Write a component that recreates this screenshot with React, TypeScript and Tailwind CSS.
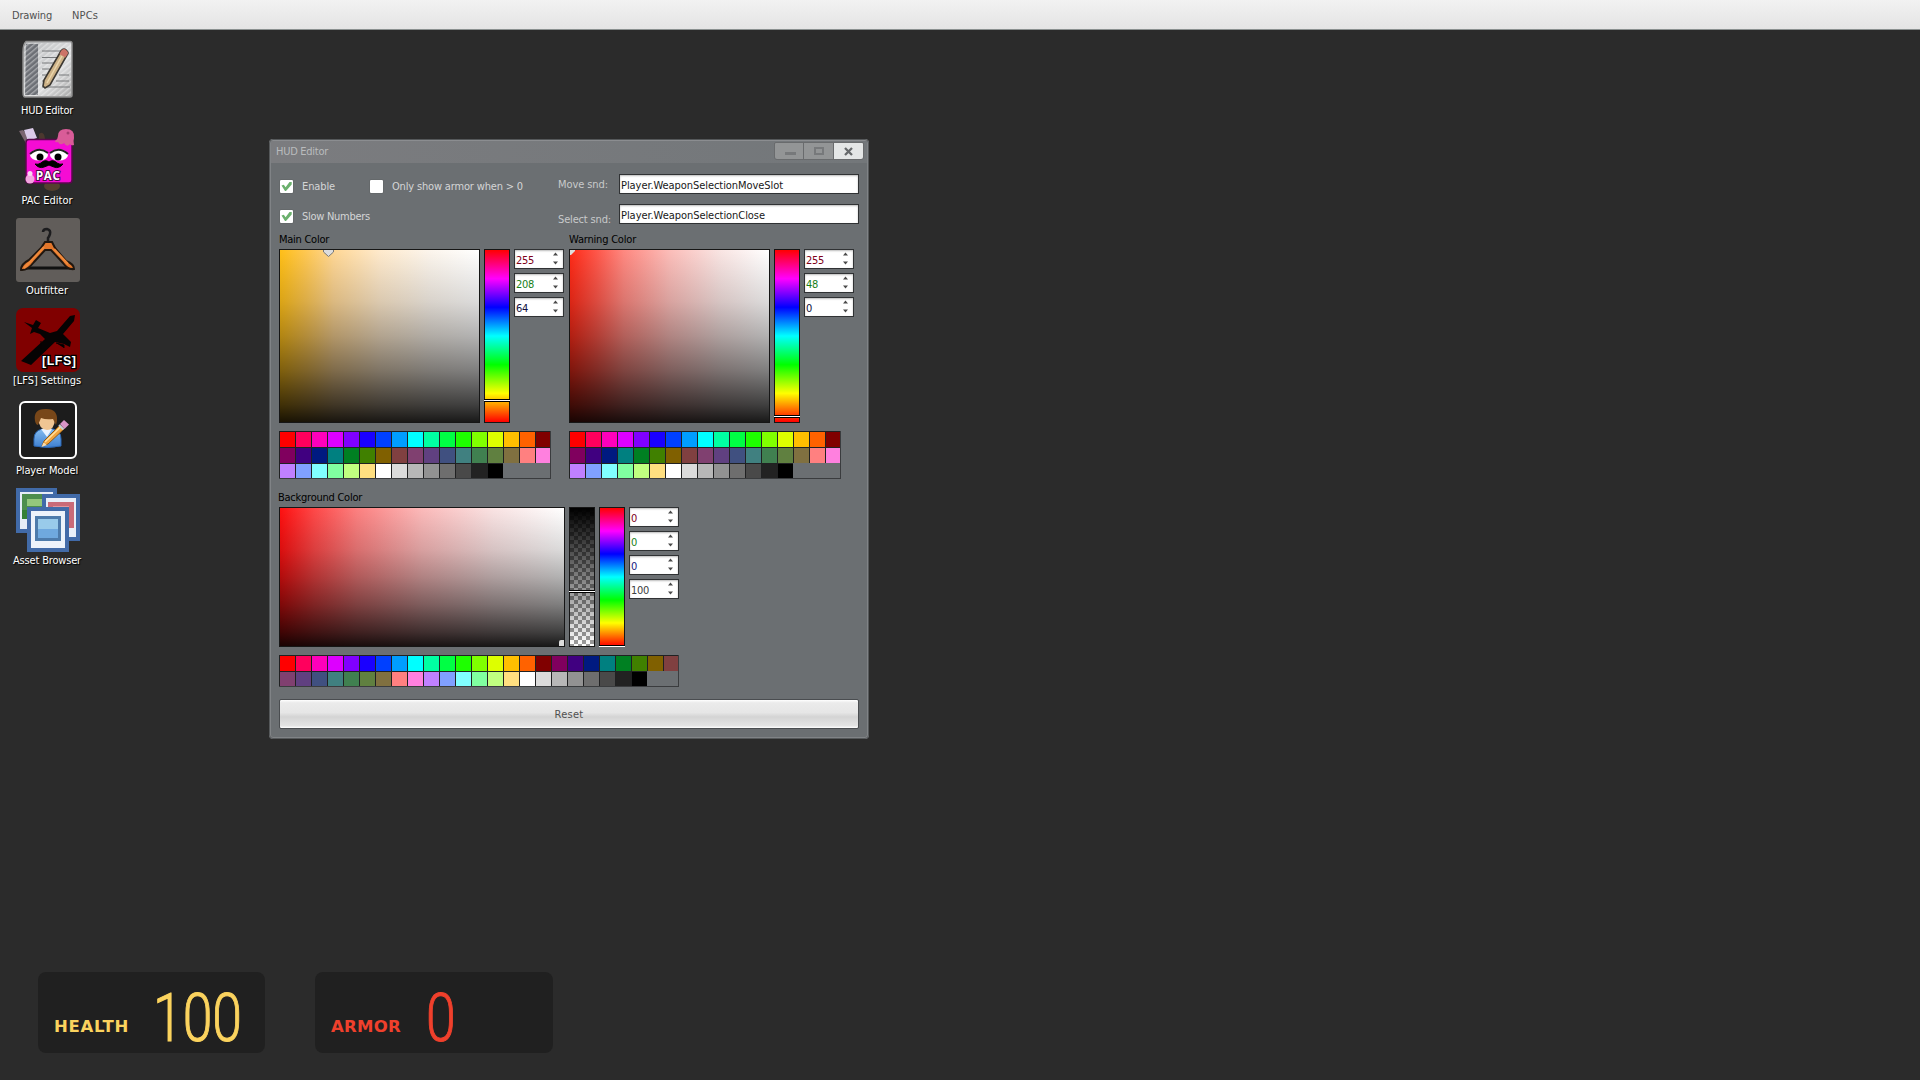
import React, { useLayoutEffect, useRef, useState } from "react";

type TxtProps = { children: string; w?: number; className?: string };

/* Single-line label whose tracking is tuned so that it spans `w` pixels. */
function Txt({ children, w, className = "" }: TxtProps) {
  const ref = useRef<HTMLSpanElement>(null);
  const [ls, setLs] = useState(0);
  useLayoutEffect(() => {
    if (!ref.current || !w) return;
    const natural = ref.current.getBoundingClientRect().width;
    setLs((w - natural) / children.length);
  }, []);
  return (
    <span ref={ref} className={"inline-block self-start whitespace-pre " + className} style={{ letterSpacing: ls + "px" }}>
      {children}
    </span>
  );
}

const PALETTE = [
  "#ff0000", "#ff005d", "#ff00bb", "#dd00ff", "#8000ff", "#1a00ff", "#0040ff", "#009dff", "#00ffff",
  "#00ffa2", "#00ff44", "#1eff00", "#80ff00", "#ddff00", "#ffbf00", "#ff6200", "#800000",
  "#80005e", "#400080", "#001a80", "#008080", "#008022", "#408000", "#806000", "#804040",
  "#804070", "#604080", "#405080", "#408080", "#408050", "#608040", "#807040", "#ff8080",
  "#ff80df", "#c080ff", "#80a0ff", "#80ffff", "#80ffa0", "#c0ff80", "#ffdf80", "#ffffff",
  "#dbdbdb", "#b7b7b7", "#929292", "#6e6e6e", "#494949", "#222222", "#000000",
];

function Palette({ className }: { className: string }) {
  return (
    <div className={"grid border-b border-r border-[#3a3c3e] " + className}>
      {PALETTE.map((c) => (
        <div key={c} className="border-l border-t border-black/70" style={{ backgroundColor: c, backgroundClip: "padding-box" }} />
      ))}
    </div>
  );
}

function Hue({ marker }: { marker: string }) {
  return (
    <div className="relative w-[26px] border border-[#161616] bg-[linear-gradient(to_bottom,#ff0000,#ff00ff_16.7%,#0000ff_33.3%,#00ffff_50%,#00ff00_66.7%,#ffff00_83.3%,#ff0000)]">
      <div className={"absolute -left-px h-[3px] w-[26px] border-y border-black bg-white " + marker} />
    </div>
  );
}

function NumberBox({ value, color }: { value: string; color: string }) {
  return (
    <div className="flex h-5 w-[50px] items-center justify-between border border-[#303234] bg-white pl-px pr-1 shadow-[inset_0_1px_2px_#bbb]">
      <Txt w={value.length * 6} className={"mt-[5px] text-[11px] leading-none " + color}>{value}</Txt>
      <svg width="7" height="14" viewBox="0 0 7 14" className="relative -top-px fill-[#4a4a4a]">
        <path d="M1 4.5 3.5 1.5 6 4.5zM1 10.5h5L3.500 13.500z" />
      </svg>
    </div>
  );
}

function Check({ on }: { on?: boolean }) {
  return (
    <div className="h-[13px] w-[13px] rounded-[1px] bg-white shadow-[0_0_1px_#333]">
      {on && (
        <svg width="13" height="13" viewBox="0 0 13 13">
          <path d="M1.500 5.500 3.800 4.800 5.600 7.300 9.500 2 11.700 2 11.700 4.500 6 11 5 11z" fill="#6bb06d" />
        </svg>
      )}
    </div>
  );
}

function HudIcon() {
  return (
    <svg width="64" height="64" viewBox="0 0 64 64">
      <defs>
        <linearGradient id="paper" x1="0" y1="0" x2="1" y2="1">
          <stop offset="0" stopColor="#b4b6b8" /><stop offset=".6" stopColor="#dedfe0" /><stop offset="1" stopColor="#a8a8a8" />
        </linearGradient>
        <pattern id="hatch" width="4" height="4" patternUnits="userSpaceOnUse" patternTransform="rotate(-40)">
          <rect width="4" height="1.400" fill="#fff" opacity=".4" />
        </pattern>
      </defs>
      <path d="M10 3.500H54q2 0 2 2V57q0 2-2 2H9q-2 0-2-5V14Q7 6 10 3.500z" fill="url(#paper)" stroke="#8d8d8d" strokeWidth="1.500" />
      <path d="M10 6H22V57H9z" fill="#6c6f75" />
      <path d="M8 5H55V58H8z" fill="url(#hatch)" />
      <path d="M26 13H46M26 19.500H44M26 25H40M26 31H38M26 37H37M26 43H33M26 49H54M40 43H53M43 37H53" stroke="#77797b" strokeWidth="1" />
      <path d="M45 13q3-4 6 0q2 2 0 4L34 47l-5 3-2-2 1-6z" fill="#cdb287" stroke="#3c3832" strokeWidth="1.600" />
      <path d="M45 13q3-4 6 0q2 2 0 4l-1.500 2.500L43.500 16z" fill="#cc7468" />
      <path d="M46 18 31 45" stroke="#ead6ac" strokeWidth="1.500" />
    </svg>
  );
}

function PacIcon() {
  return (
    <svg width="64" height="64" viewBox="0 0 64 64">
      <path d="M3 3 7 2 17 13 12 19z" fill="#7b6570" />
      <path d="M8 2 17 0 21 10 12 13z" fill="#dccbe9" />
      <path d="M23 6q5-4 6 5h-6z" fill="#4b382e" />
      <ellipse cx="36" cy="58" rx="8" ry="5" fill="#54402f" />
      <path d="M13 11.500H53q3 0 3 3V52q0 3-3 3H13q-3 0-3-3V14.500q0-3 3-3z" fill="#f50cd4" stroke="#5d064f" strokeWidth="1.500" />
      <path d="M42 8q0-7 8-7 9 0 8 9-1 3 0 7-3 1-4-1-3 4-6-1-4 3-6-1-3 1-3-1 3-2 3-5z" fill="#d95c98" />
      <circle cx="52" cy="5" r="1.500" fill="#a53d70" />
      <ellipse cx="23" cy="27" rx="9" ry="5.500" fill="#fff" /><ellipse cx="43" cy="27" rx="9" ry="5.500" fill="#fff" />
      <path d="M14 26q9-8 18-1M34 25q9-7 18 1" stroke="#222" strokeWidth="2" fill="none" />
      <circle cx="24" cy="29" r="3.500" /><circle cx="42" cy="29" r="3.500" />
      <path d="M33 34q4-3 8 1 3 2 6 1-4 5-9 3-3-1-5-2-2 1-5 2-5 2-9-3 3 1 6-1 4-4 8-1z" stroke="#000" />
      <circle cx="14" cy="51" r="4.500" fill="#f2a5df" /><circle cx="14" cy="45.500" r="2.500" fill="#fad6f0" />
      <text x="20" y="52" textLength="24" fontFamily="Noto Sans" fontWeight="700" fontSize="11.500" fill="#fff" stroke="#4a0a42" strokeWidth="2" paintOrder="stroke">PAC</text>
    </svg>
  );
}

function OutfitterIcon() {
  return (
    <svg width="64" height="64" viewBox="0 0 64 64">
      <rect width="64" height="64" rx="3" fill="#615d5a" />
      <path d="M6 50H58" stroke="#111" strokeWidth="2.800" />
      <path d="M27 14q0-3 4-3 4 1 3 5-1 3-2 4v6" fill="none" stroke="#1c1c1e" strokeWidth="2.500" />
      <path d="M29 24h7l3 6 11 13q8 3 8 8-6 1-11-6L35 32h-6L18 44Q11 53 5 52q0-6 8-10L25 30z" fill="#e2762b" stroke="#201710" strokeWidth="2" />
      <path d="M28 29 15 43 8 50M38 31 52 46" stroke="#f08a3c" strokeWidth="2.200" fill="none" />
    </svg>
  );
}

function LfsIcon() {
  return (
    <svg width="64" height="64" viewBox="0 0 64 64">
      <rect width="64" height="64" rx="7" fill="#800000" />
      <path d="M8 14 17 17 20 12 25 15 22 20 34 25 41 23 54 8 59 7 58 13 47 26 55 34 54 39 48 36 39 34 15 57 5 53 29 31 24 26 18 24 14 26 16 20z" fill="#060303" />
      <path d="M25 33v8M40 35l8 2v3" stroke="#060303" />
      <text x="26" y="56.500" textLength="34" fontFamily="Liberation Sans" fontWeight="700" fontSize="12.500" fill="#fff" stroke="#000" strokeWidth="2.500" paintOrder="stroke">[LFS]</text>
    </svg>
  );
}

function PlayerIcon() {
  return (
    <svg width="64" height="64" viewBox="0 0 64 64">
      <defs>
        <linearGradient id="shirt" x1="0" y1="0" x2="0" y2="1"><stop offset="0" stopColor="#82bbf0" /><stop offset="1" stopColor="#3e7fd0" /></linearGradient>
      </defs>
      <rect x="4" y="4" width="56" height="56" rx="5" fill="#1c1c1c" stroke="#fff" strokeWidth="2" />
      <path d="M18 48V41q0-8 8-10h11q8 2 8 10v7q-13 3-27 0z" fill="url(#shirt)" stroke="#2b67b5" />
      <path d="M25 31h11l-5 8z" fill="#e8f2ff" />
      <path d="M22 20q0-4 9-4 8 0 8 6-1 10-8 10-8 0-9-12z" fill="#f0c593" />
      <path d="M19 23q-2-12 10-12 13-1 12 12l-1 4-3-6q-7 1-12-1l-3 7q-2 0-3-4z" fill="#784719" />
      <path d="M26 48 28 43 44 27 48 31 32 46z" fill="#f3a63f" stroke="#8f5a16" />
      <path d="M29 44 45 28.500" stroke="#ffe0a0" strokeWidth="1.500" />
      <path d="M25.500 49 27.500 44.500 31 47z" fill="#f6deb5" />
      <path d="M44 26 48 22 53 26.500 48.500 31z" fill="#d994c8" />
      <path d="M43 27 47.500 31.500" stroke="#c8d0d8" strokeWidth="2" />
    </svg>
  );
}

function AssetIcon() {
  return (
    <svg width="64" height="64" viewBox="0 0 64 64" shapeRendering="crispEdges">
      <path d="M0 0H41V45H0z" fill="#416aa8" /><path d="M4 4H37V41H4z" fill="#e6edf7" />
      <path d="M6 6H34V31H6z" fill="#4d8e4d" /><path d="M11 11H29V18H11z" fill="#94c77c" /><path d="M6 22H15V31H6z" fill="#358035" />
      <path d="M26 6H64V53H26z" fill="#416aa8" /><path d="M30 10H60V49H30z" fill="#e8eef8" />
      <path d="M32 14H58V40H32z" fill="#c96a78" /><path d="M37 18H53V27H37z" fill="#e3959b" />
      <path d="M11 19H53V64H11z" fill="#426ba8" /><path d="M15 23H49V60H15z" fill="#edf3fb" />
      <path d="M19 28H45V53H19z" fill="#4d7bab" /><path d="M22 31H42V41H22z" fill="#99cbea" /><path d="M22 41H42V50H22z" fill="#6fa9df" />
    </svg>
  );
}

const ICONS = [
  { label: "HUD Editor", w: 52, Icon: HudIcon },
  { label: "PAC Editor", w: 51, Icon: PacIcon },
  { label: "Outfitter", w: 42, Icon: OutfitterIcon },
  { label: "[LFS] Settings", w: 68, Icon: LfsIcon },
  { label: "Player Model", w: 62, Icon: PlayerIcon },
  { label: "Asset Browser", w: 68, Icon: AssetIcon },
];

const SHADE = "absolute inset-0 bg-[linear-gradient(to_bottom,rgb(0_0_0/0),rgb(0_0_0/.14)_30%,rgb(0_0_0/.3)_50%,rgb(0_0_0/.5)_70%,rgb(0_0_0/.75)_90%,rgb(0_0_0/.9))]";

type MixerProps = { title: string; w: number; base: string; marker: React.ReactNode; hue: string; values: string[] };

function ColorMixer({ title, w, base, marker, hue, values }: MixerProps) {
  return (
    <div className="w-[290px]">
      <div className="h-[18px]"><Txt w={w} className="mt-px align-top text-[11px] leading-4 text-black">{title}</Txt></div>
      <div className="flex h-[174px] gap-1">
        <div className={"relative w-[201px] overflow-hidden border border-[#161616] " + base}><div className={SHADE} />{marker}</div>
        <Hue marker={hue} />
        <div className="flex flex-col gap-1">
          <NumberBox value={values[0]} color="text-[#80001a]" />
          <NumberBox value={values[1]} color="text-[#188018]" />
          <NumberBox value={values[2]} color="text-[#101040]" />
        </div>
      </div>
      <Palette className="mt-2 w-[272px] grid-cols-[repeat(16,16px)_15px] grid-rows-[16px_16px_15px]" />
    </div>
  );
}

const FONT = "font-['DejaVu_Sans_Condensed','DejaVu_Sans',sans-serif] [font-stretch:condensed]";

export default function App() {
  return (
    <div className={"relative h-[1080px] w-[1920px] overflow-hidden bg-[#2b2b2b] " + FONT}>
      <header className="flex h-[30px] border-b border-[#8b9190] bg-linear-to-b from-[#f2f2f2] to-[#e4e4e4] text-[11px] leading-[32px] text-[#505050]">
        <Txt w={40} className="ml-3">Drawing</Txt>
        <Txt w={26} className="ml-5">NPCs</Txt>
      </header>

      <nav className="ml-4 flex w-16 flex-col pt-2">
        {ICONS.map(({ label, w, Icon }) => (
          <div key={label} className="flex h-[90px] flex-col items-center">
            <Icon />
            <Txt w={w} className="mr-0.5 mt-px self-center! text-[11px] leading-4 text-white [text-shadow:1px_1px_1px_#000]">{label}</Txt>
          </div>
        ))}
      </nav>

      <section className="absolute left-[269px] top-[139px] h-[600px] w-[600px] rounded-[4px] border-2 border-[#808386] border-t-[#8b8d90] bg-[#6b6f72] outline-1 -outline-offset-1 outline-[#55585a]">
        <div className="flex h-[22px] justify-between bg-linear-to-r from-[#7b7c7f] to-[#73777a] pl-[5px] pr-[3px]">
          <Txt w={52} className="text-[11px] leading-[22px] text-[#b9bbbd]">HUD Editor</Txt>
          <div className="mt-px flex h-[18px] gap-px overflow-hidden rounded-b-[3px] rounded-t-[2px] border border-[#696b6d] bg-[#696b6d]">
            <div className="flex w-7 items-center justify-center bg-[#939596]"><div className="ml-0.5 mt-1 h-[3px] w-[11px] bg-[#77797b]" /></div>
            <div className="flex w-[29px] items-center justify-center bg-[#939596]"><div className="h-2 w-2.5 border-2 border-[#77797b]" /></div>
            <div className="flex w-[29px] items-center justify-center bg-[#e4e6e6]">
              <svg width="9" height="9" viewBox="0 0 9 9"><path d="M1 1 8 8M8 1 1 8" stroke="#66696b" strokeWidth="2.300" /></svg>
            </div>
          </div>
        </div>

        <div className="flex h-[68px] pl-[9px]">
          <div className="w-[278px] pt-[17px] text-[11px] leading-[13px] text-[#d4d5d6]">
            <div className="flex h-[30px]">
              <Check on />
              <Txt w={33} className="ml-[9px]">Enable</Txt>
              <div className="ml-[35px]"><Check /></div>
              <Txt w={131} className="ml-[9px]">{"Only show armor when > 0"}</Txt>
            </div>
            <div className="flex">
              <Check on />
              <Txt w={68} className="ml-[9px]">Slow Numbers</Txt>
            </div>
          </div>
          <div className="flex w-[61px] flex-col gap-[22px] pt-[15px] text-[11px] leading-[13px] text-[#c8cacb]">
            <Txt w={50}>Move snd:</Txt>
            <Txt w={53}>Select snd:</Txt>
          </div>
          <div className="flex flex-col gap-2.5 pt-[11px] text-[11px] text-[#181818]">
            {[{ t: "Player.WeaponSelectionMoveSlot", w: 162 }, { t: "Player.WeaponSelectionClose", w: 144 }].map((f) => (
              <div key={f.t} className="h-5 w-60 border border-[#303234] bg-white pl-px leading-[21px] shadow-[inset_0_1px_2px_#bbb]">
                <Txt w={f.w}>{f.t}</Txt>
              </div>
            ))}
          </div>
        </div>

        <div className="flex pl-2">
          <ColorMixer
            title="Main Color" w={50}
            base="bg-[linear-gradient(to_right,#ffbf18,#ffc852_13%,#ffd795_27%,#ffeacc_50%,#fcf5ec_75%,#fff)]"
            hue="top-[149px]"
            values={["255", "208", "64"]}
            marker={<svg width="11" height="8" viewBox="0 0 11 8" className="absolute left-[43px] -top-px"><path d="M.5 0V3L5.500 7.500 10.500 3V0z" fill="#ddd" stroke="#777" /></svg>}
          />
          <ColorMixer
            title="Warning Color" w={67}
            base="bg-[linear-gradient(to_right,#ff2b18,#ff5548_13%,#ff8880_27%,#fcbdb9_50%,#f9e4e2_75%,#fff)]"
            hue="top-[165px]"
            values={["255", "48", "0"]}
            marker={<svg width="6" height="6" viewBox="0 0 6 6" className="absolute left-0 top-0"><path d="M0 0H5V1L1 5H0z" fill="#ddd" /></svg>}
          />
        </div>

        <div className="pl-2 pt-[10px]">
          <div className="h-[18px]"><Txt w={84} className="-ml-px mt-px align-top text-[11px] leading-4 text-black">Background Color</Txt></div>
          <div className="flex h-[140px] gap-1">
            <div className="relative w-[286px] border border-[#161616] bg-[linear-gradient(to_right,#ff1010,#ff4848_12%,#fd8080_27%,#fcbaba_50%,#fae3e3_75%,#fff)]">
              <div className={SHADE} />
              <div className="absolute bottom-0 right-0 h-[6px] w-[5px] rounded-tl-[2px] bg-[#ddd]" />
            </div>
            <div className="relative w-[26px] border border-[#161616] bg-[linear-gradient(to_bottom,#000,transparent),repeating-conic-gradient(#fff_0_25%,#9c9c9c_0_50%)] bg-[length:100%_100%,8px_8px]">
              <div className="absolute -left-px top-[82px] h-[3px] w-[26px] border-y border-black bg-white" />
            </div>
            <Hue marker="top-[137px] border-b-0! h-[2px]!" />
            <div className="flex flex-col gap-1">
              <NumberBox value="0" color="text-[#80001a]" />
              <NumberBox value="0" color="text-[#188018]" />
              <NumberBox value="0" color="text-[#181880]" />
              <NumberBox value="100" color="text-[#404040]" />
            </div>
          </div>
          <Palette className="mt-2 w-[400px] grid-cols-[repeat(24,16px)_15px] grid-rows-[16px_15px]" />
          <button className="mt-3 block h-[30px] w-[580px] rounded-[2px] border border-[#4a4d50] bg-[linear-gradient(to_bottom,#fff,#ebebeb_10%,#e6e6e6_45%,#d4d4d4_60%,#e4e4e4_92%,#fff)] pt-0.5 text-[11px] text-[#505050]">
            <Txt w={29}>Reset</Txt>
          </button>
        </div>
      </section>

      <footer className="absolute left-[38px] top-[972px] flex gap-[50px] font-['DejaVu_Sans',sans-serif] [font-stretch:normal]">
        <div className="flex h-[81px] w-[227px] rounded-lg bg-[#202020] text-[#fbd35e]">
          <Txt w={75} className="ml-4 mt-[44px] text-[16.5px] leading-[22px] font-bold">HEALTH</Txt>
          <div className="ml-[24px] mt-[9px] origin-left scale-x-81 font-['Roboto',sans-serif] text-[66px] leading-[76px] font-light [-webkit-text-stroke:1px_#fbd35e]">100</div>
        </div>
        <div className="flex h-[81px] w-[238px] rounded-lg bg-[#202020] text-[#f0402c]">
          <Txt w={70} className="ml-4 mt-[44px] text-[16.5px] leading-[22px] font-bold">ARMOR</Txt>
          <div className="ml-[25px] mt-[9px] origin-left scale-x-81 font-['Roboto',sans-serif] text-[66px] leading-[76px] font-light [-webkit-text-stroke:1px_#f0402c]">0</div>
        </div>
      </footer>
    </div>
  );
}
